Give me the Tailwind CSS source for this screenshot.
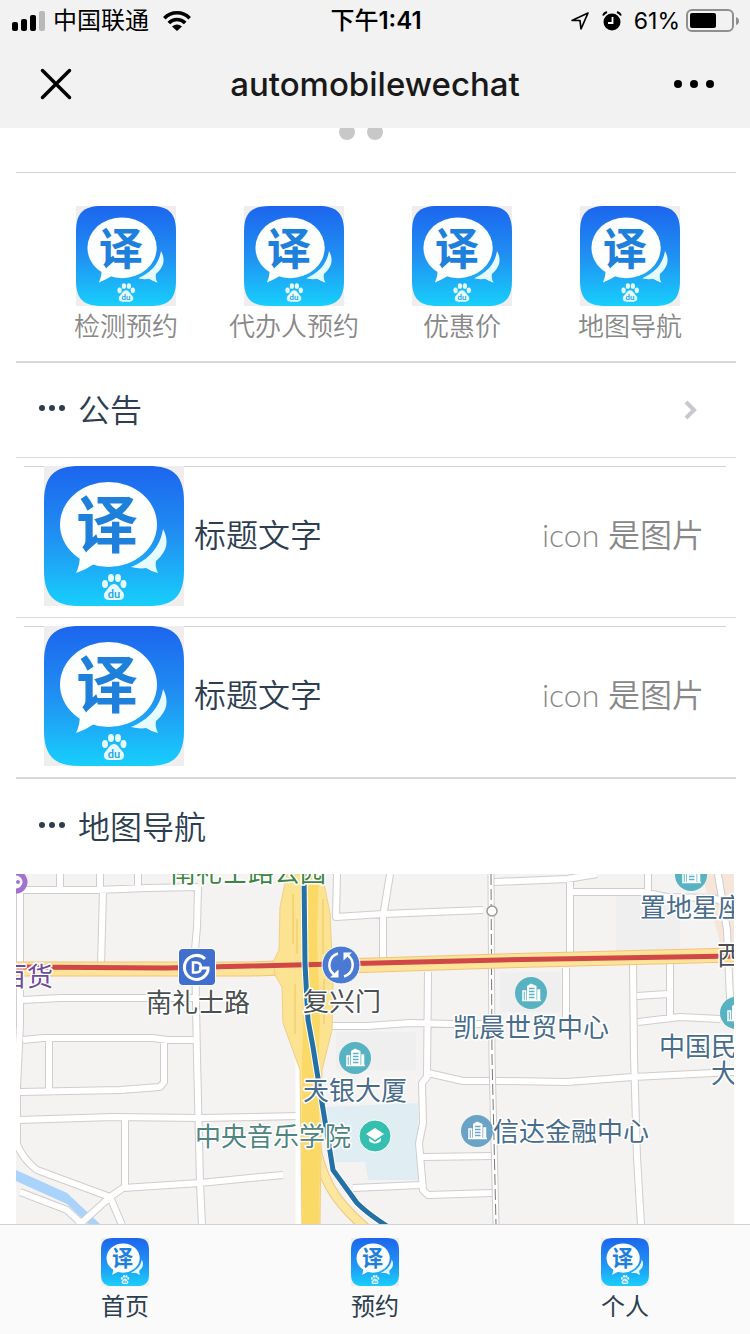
<!DOCTYPE html>
<html lang="zh-CN">
<head>
  <meta charset="UTF-8" />
  <meta name="viewport" content="width=device-width, initial-scale=1.0" />
  <title>automobilewechat</title>
  <script src="https://cdn.jsdelivr.net/npm/@tailwindcss/browser@4"></script>
</head>
<body class="bg-white min-h-screen flex flex-col text-[#2c3e50] font-['Lato','Noto_Sans_CJK_SC',sans-serif]">
  <!-- Shared symbols -->
  <svg class="absolute size-0" aria-hidden="true">
    <defs>
      <linearGradient id="logoBg" x1="0" y1="0" x2="0" y2="1">
        <stop offset="0" stop-color="#1c65ee" />
        <stop offset="0.5" stop-color="#2090f2" />
        <stop offset="1" stop-color="#18cffc" />
      </linearGradient>
      <symbol id="logo" viewBox="0 0 140 140">
        <rect width="140" height="140" fill="#efedee" />
        <path d="M0 36C0 10 10 0 36 0H104C130 0 140 10 140 36V104C140 130 130 140 104 140H36C10 140 0 130 0 104Z" fill="url(#logoBg)" />
        <path d="M119 63C125 74 124 85 112 95C111 99 112 103 114 107C109 106 106 104 102 102C97 103 92 102 87 101C104 94 116 82 119 63Z" fill="#e6fbff" />
        <ellipse cx="64.500" cy="58.500" rx="48.500" ry="42.500" fill="#fdfefe" />
        <path d="M36 86C36 95 35 101 32 107C40 104 46 101 51 97L60 92Z" fill="#fdfefe" />
        <text x="63" y="82" font-size="62" font-weight="700" text-anchor="middle" fill="#1f80dc">译</text>
        <g fill="#e6fbff">
          <ellipse cx="61" cy="118" rx="3" ry="4" />
          <ellipse cx="67" cy="112" rx="3" ry="4" />
          <ellipse cx="74" cy="112" rx="3" ry="4" />
          <ellipse cx="79.500" cy="118" rx="3" ry="4" />
          <path d="M70 118C74 118 75 122 78 125C82 129 80 134 75 134H65C60 134 58 129 62 125C65 122 66 118 70 118Z" />
        </g>
        <text x="70" y="132" font-size="11" font-weight="700" text-anchor="middle" fill="#1fa5dc">du</text>
      </symbol>
      <symbol id="dots" viewBox="0 0 28 8">
        <circle cx="4" cy="4" r="3" /><circle cx="14" cy="4" r="3" /><circle cx="24" cy="4" r="3" />
      </symbol>
      <symbol id="building" viewBox="0 0 32 32">
        <circle cx="16" cy="16" r="16" />
        <path d="M7 23.500H26M8 23V14H10.500V23M23 23V13H24.500V23" stroke="#fff" stroke-width="1.500" fill="none" />
        <path d="M12 23V9L16 6.500L21.500 9V23Z" fill="#fff" />
        <path d="M14 11.500H19.500M14 14.500H19.500M14 17.500H19.500M14 20.500H19.500" stroke="currentColor" stroke-width="1.500" />
      </symbol>
    </defs>
  </svg>

  <!-- Header -->
  <header class="bg-[#f2f2f2] text-black font-['Inter','Noto_Sans_CJK_SC',sans-serif]">
    <div class="h-10 grid grid-cols-3 items-center pl-3 pr-2.5 pt-0.5 text-2xl leading-8">
      <div class="flex items-center">
        <svg class="w-[33px] h-5 mr-2" viewBox="0 0 33 20">
          <rect x="0" y="11" width="6" height="9" rx="2" />
          <rect x="9" y="8" width="6" height="12" rx="2" />
          <rect x="18" y="4" width="6" height="16" rx="2" />
          <rect x="27" y="0" width="6" height="20" rx="2" fill="#b9b9b9" />
        </svg>
        <span>中国联通</span>
        <svg class="w-7 h-5 ml-3.5" viewBox="0 0 28 20" fill="none" stroke="#000" stroke-width="3.600">
          <path d="M1.300 7.200C8.500 0 19.500 0 26.700 7.200" />
          <path d="M5.800 12C10.500 7.300 17.500 7.300 22.200 12" />
          <path d="M9 15.500Q14 11.500 19 15.500L14 20Z" fill="#000" stroke="none" />
        </svg>
      </div>
      <div class="text-center font-medium">下午<span class="font-semibold">1:41</span></div>
      <div class="flex items-center justify-end">
        <svg class="w-5 h-5 mr-3" viewBox="0 0 20 20" fill="none" stroke="#000" stroke-width="1.700" stroke-linejoin="round">
          <path d="M18 2L2 9.500H10L11 18Z" />
        </svg>
        <svg class="w-5 h-5 mr-3" viewBox="0 0 20 20">
          <circle cx="10" cy="11" r="8.500" />
          <path d="M1 4.500Q2 2 5 1M19 4.500Q18 2 15 1" fill="none" stroke="#000" stroke-width="2" />
          <path d="M10.500 6V12H6" fill="none" stroke="#fff" stroke-width="1.800" />
        </svg>
        <span class="text-[23px] mr-1.5">61%</span>
        <svg class="w-[54px] h-6" viewBox="0 0 54 24">
          <rect x="1" y="1" width="46" height="21" rx="5" fill="none" stroke="#8f8f8f" stroke-width="2" />
          <rect x="4" y="4" width="26" height="15" rx="2" />
          <path d="M50 8Q53 9 53 12Q53 15 50 16Z" fill="#8f8f8f" />
        </svg>
      </div>
    </div>
    <div class="h-22 flex items-center justify-between px-9">
      <button type="button" aria-label="关闭" class="w-10">
        <svg class="size-10" viewBox="0 0 40 40" fill="none" stroke="#000" stroke-width="3.500" stroke-linecap="round">
          <path d="M6.500 6.500L33.500 33.500M33.500 6.500L6.500 33.500" />
        </svg>
      </button>
      <h1 class="text-[33px] leading-10 font-medium text-[#191919]">automobilewechat</h1>
      <button type="button" aria-label="更多" class="w-10">
        <svg class="w-10 h-10" viewBox="0 0 40 40">
          <circle cx="4" cy="20" r="4" /><circle cx="20" cy="20" r="4" /><circle cx="36" cy="20" r="4" />
        </svg>
      </button>
    </div>
  </header>

  <main class="flex-1">
    <div class="pl-4 pr-[14px]">
      <!-- Carousel indicator, half scrolled away -->
      <div class="h-[45px] border-b border-[#d3d3d3] flex justify-center pr-[30px]">
        <svg class="w-11 h-3" viewBox="0 0 44 12" fill="#c8c8c8">
          <circle cx="8" cy="4" r="8" /><circle cx="36" cy="4" r="8" />
        </svg>
      </div>

      <!-- Shortcuts -->
      <nav class="grid grid-cols-4 pt-[33px] pb-[15px] pl-[26px] pr-[22px] border-b-2 border-[#d9d9d9] text-[26px] leading-10 font-[350] text-[#888]">
        <a href="#" class="flex flex-col items-center whitespace-nowrap">
          <svg class="size-25"><use href="#logo" /></svg>
          检测预约
        </a>
        <a href="#" class="flex flex-col items-center whitespace-nowrap">
          <svg class="size-25"><use href="#logo" /></svg>
          代办人预约
        </a>
        <a href="#" class="flex flex-col items-center whitespace-nowrap">
          <svg class="size-25"><use href="#logo" /></svg>
          优惠价
        </a>
        <a href="#" class="flex flex-col items-center whitespace-nowrap">
          <svg class="size-25"><use href="#logo" /></svg>
          地图导航
        </a>
      </nav>

      <!-- Notices -->
      <a href="#" class="h-[95px] flex items-center pl-[22px] pr-[38px] border-b border-[#d9d9d9]">
        <svg class="w-7 h-2 mb-1 mr-3 fill-[#2c3e50]"><use href="#dots" /></svg>
        <h2 class="flex-1 text-[32px] leading-10 font-[350]">公告</h2>
        <svg class="w-4 h-5" viewBox="0 0 16 20" fill="none" stroke="#c8c8cd" stroke-width="4">
          <path d="M4 2L12 10L4 18" />
        </svg>
      </a>
      <ul>
        <li class="pt-2 pb-[11px] border-b border-[#d9d9d9]">
          <div class="ml-2 mr-2.5 pl-5 pr-[22px] border-t border-[#d3d3d3] flex items-center gap-2.5 text-[32px] leading-10 font-[350]">
            <svg class="size-35 -mt-px"><use href="#logo" /></svg>
            <p class="flex-1 pb-1">标题文字</p>
            <span class="pb-1 text-[#888]">icon 是图片</span>
          </div>
        </li>
        <li class="pt-2 pb-[11px] border-b-2 border-[#d9d9d9]">
          <div class="ml-2 mr-2.5 pl-5 pr-[22px] border-t border-[#d3d3d3] flex items-center gap-2.5 text-[32px] leading-10 font-[350]">
            <svg class="size-35 -mt-px"><use href="#logo" /></svg>
            <p class="flex-1 pb-1">标题文字</p>
            <span class="pb-1 text-[#888]">icon 是图片</span>
          </div>
        </li>
      </ul>

      <div class="h-[95px] flex items-center pl-[22px]">
        <svg class="w-7 h-2 mb-1 mr-3 fill-[#2c3e50]"><use href="#dots" /></svg>
        <h2 class="text-[32px] leading-10 font-[350]">地图导航</h2>
      </div>
    </div>

    <!-- Map -->
    <div class="px-4">
      <svg class="block w-full h-auto overflow-hidden bg-[#f4f3f1]" viewBox="0 0 718 350" role="img" aria-label="地图">
        <defs>
          <path id="roads" d="M4 0V150L1 214V270Q6 284 21 296L94 323L107 314L184 309L234 304L267 301
            M109 246V314 M2 246L97 243L184 244L284 242 M4 218L104 216L144 213L148 208V166 M33 166V216
            M7 166L27 164H137L151 166H179 M7 126L44 124H179
            M182 13L181 53L179 76L181 183L184 309L186 351 M4 16H81L131 14L182 13
            M44 0V14 M84 0V14 M122 0V13 M87 16L85 92
            M4 318L51 336L66 350 M94 323L62 352 M94 323L106 351
            M321 0L320 43L367 40L467 36 M374 0L367 43V86 M316 152H351L394 149L437 150H476
            M412 98L411 203L406 209L407 249L403 269L407 316L412 321L477 319
            M412 199L447 207H484L551 208L617 203L697 199L720 198 M407 283L477 282 M337 314L404 311 M304 301H310
            M478 8L551 5L581 0 M554 6V82 M557 18H627L651 23L697 24L712 30 M632 0V18
            M702 0L711 56L714 125 M550 94V143 M617 90L618 183L621 283L625 351 M654 90V143
            M621 122L651 120 M622 148L664 143L704 145" />
        </defs>
        <!-- blocks, water, campus -->
        <path d="M484 98H545V138H484ZM600 22H664V78H600ZM320 158H400V196H320Z" fill="#efeff0" />
        <path d="M686 0H718V84H708Z" fill="#f6e6da" />
        <path d="M309 233L402 229V306H352L349 288H312Z" fill="#e0eef4" />
        <path d="M0 296L51 319L84 350H72L51 330L0 307Z" fill="#a9d3fb" />
        <!-- streets -->
        <g fill="none" stroke-linejoin="round">
          <use href="#roads" stroke="#cfcdcd" stroke-width="8" />
          <use href="#roads" stroke="#fff" stroke-width="6" />
          <path d="M475 0L476 183L480 350" stroke="#cfcdcd" stroke-width="7" />
          <path d="M475 0L476 183L480 350" stroke="#fff" stroke-width="5" />
          <path d="M475 0L476 183L480 350" stroke="#777" stroke-width="1" stroke-dasharray="11 4" />
        </g>
        <!-- expressways -->
        <path d="M282 180V350" stroke="#fff" stroke-width="5" />
        <path d="M300 270Q302 290 314 313Q326 334 350 354" fill="none" stroke="#efc877" stroke-width="10" />
        <path d="M300 270Q302 290 314 313Q326 334 350 354" fill="none" stroke="#fce6a0" stroke-width="8" />
        <path d="M0 95H234L484 87L718 81" fill="none" stroke="#f2c27b" stroke-width="15" />
        <path d="M0 95H234L484 87L718 81" fill="none" stroke="#fde498" stroke-width="13" />
        <path d="M271 0L264 33L263 76L257 88L259 101L266 113L267 149L284 196L286 350H304L306 196L316 156L317 109L314 39L306 0Z" fill="#fce391" stroke="#f0cf80" />
        <path d="M284 0H303L301 60L304 150L302 200L304 280L303 350H286L286 190L287 150Z" fill="#fbd967" />
        <path d="M277 20V70M281 45V80M307 25V80M279 110V160M308 105V150" stroke="#efc65c" fill="none" />
        <!-- metro lines -->
        <path d="M0 93L150 94L234 92L484 86L718 82" fill="none" stroke="#cf4746" stroke-width="5" />
        <path d="M288 0L289 90L292 146L297 173L306 229L311 259L317 296L341 329Q352 340 371 352" fill="none" stroke="#fff" stroke-width="7" />
        <path d="M288 0L289 90L292 146L297 173L306 229L311 259L317 296L341 329Q352 340 371 352" fill="none" stroke="#2471a6" stroke-width="5" />
        <circle cx="476" cy="37" r="5" fill="#fff" stroke="#999" stroke-width="1.500" />
        <!-- pins -->
        <circle cx="0" cy="8" r="9" fill="#fff" stroke="#a372cf" stroke-width="5" />
        <circle cx="2" cy="8" r="2" fill="#a372cf" />
        <rect x="162" y="74" width="38" height="38" rx="5" fill="#fff" />
        <rect x="163" y="75" width="36" height="36" rx="4" fill="#406fcd" />
        <path d="M189 85A12 12 0 1 0 192 96.500V94H183" fill="none" stroke="#fff" stroke-width="3" />
        <path d="M177 88.500H180Q185 88.500 185 93.500Q185 98.500 180 98.500H177Z" fill="none" stroke="#fff" stroke-width="2.500" />
        <circle cx="325" cy="91" r="19" fill="#4a7ad2" stroke="#fff" />
        <path d="M322 79.500A12 12 0 0 0 318 100.500M328 102.500A12 12 0 0 0 332 81.500" fill="none" stroke="#fff" stroke-width="2.500" />
        <path d="M314 103.500H322.500V95.500ZM336 78.500H327.500V86.500Z" fill="#fff" />
        <use href="#building" x="323" y="168" width="32" height="32" fill="#57b3c2" class="text-[#57b3c2]" />
        <use href="#building" x="445" y="241" width="32" height="32" fill="#6aa3c6" class="text-[#6aa3c6]" />
        <use href="#building" x="499" y="103" width="32" height="32" fill="#57b3c2" class="text-[#57b3c2]" />
        <use href="#building" x="659" y="-15" width="32" height="32" fill="#57b3c2" class="text-[#57b3c2]" />
        <use href="#building" x="704" y="123" width="32" height="32" fill="#57b3c2" class="text-[#57b3c2]" />
        <circle cx="359" cy="262" r="16" fill="#34bfae" stroke="#fff" />
        <path d="M359 254L368 260L359 266L350 260Z" fill="#fff" />
        <path d="M353 264L359 268L365 264V267Q359 272 353 267Z" fill="#fff" />
        <!-- labels -->
        <g font-size="26" stroke="#fff" stroke-width="3" stroke-linejoin="round" class="[paint-order:stroke]">
          <text x="154" y="8" fill="#3d8545">南礼士路公园</text>
          <text x="-15" y="112" fill="#6e4b9c">百货</text>
          <text x="130" y="138" fill="#4a4f4f">南礼士路</text>
          <text x="287" y="137" fill="#4a4f55">复兴门</text>
          <text x="437" y="163" fill="#476c8c">凯晨世贸中心</text>
          <text x="287" y="226" fill="#476c8c">天银大厦</text>
          <text x="179" y="272" fill="#4e8580">中央音乐学院</text>
          <text x="477" y="267" fill="#476c8c">信达金融中心</text>
          <text x="624" y="43" fill="#476c8c">置地星座</text>
          <text x="701" y="91" fill="#4a4f4f">西</text>
          <text x="643" y="182" fill="#476c8c">中国民</text>
          <text x="695" y="209" fill="#476c8c">大</text>
        </g>
      </svg>
    </div>
  </main>

  <!-- Tab bar -->
  <footer class="bg-[#fafafa] border-t border-[#d3d3d3]">
    <nav class="grid grid-cols-3 pt-[13px] pb-2 text-2xl leading-10">
      <a href="#" class="flex flex-col items-center">
        <svg class="size-12"><use href="#logo" /></svg>
        首页
      </a>
      <a href="#" class="flex flex-col items-center">
        <svg class="size-12"><use href="#logo" /></svg>
        预约
      </a>
      <a href="#" class="flex flex-col items-center">
        <svg class="size-12"><use href="#logo" /></svg>
        个人
      </a>
    </nav>
  </footer>
</body>
</html>
